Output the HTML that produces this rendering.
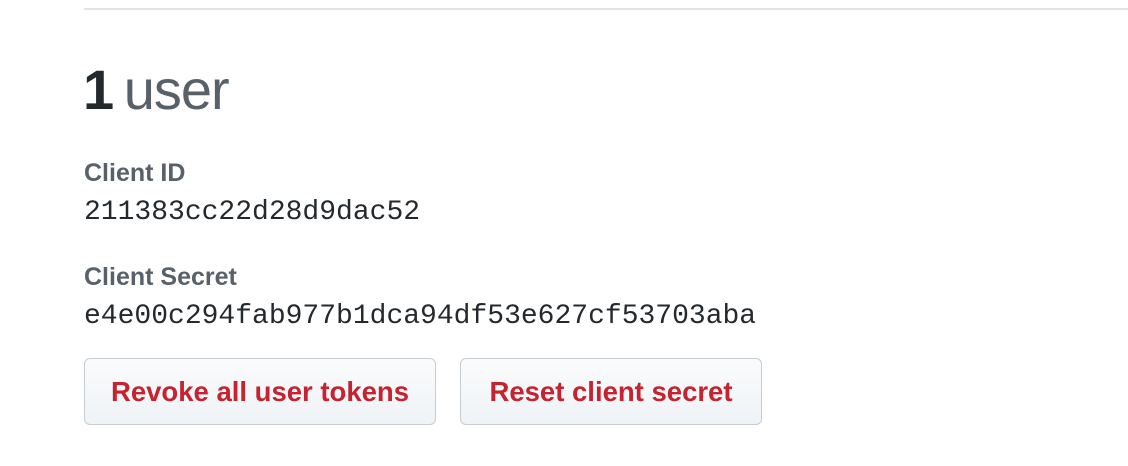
<!DOCTYPE html>
<html><head><style>
body{margin:0;background:#fff;width:1128px;height:466px;overflow:hidden;font-family:"Liberation Sans",sans-serif;position:relative}
.line{position:absolute;left:84px;right:0;top:8px;height:2px;background:#e1e4e8}
.h{position:absolute;left:83px;top:56px;font-size:56px;line-height:68px;color:#586069;white-space:nowrap;letter-spacing:-1px}
.h b{color:#24292e;margin-right:-4px}
.lbl{position:absolute;left:84px;font-size:25px;font-weight:bold;color:#586069;line-height:30px}
.mono{position:absolute;left:84px;font-family:"Liberation Mono",monospace;font-size:28px;color:#24292e;line-height:32px}
.btn{position:absolute;top:358px;height:65px;border:1px solid #c7ccd1;border-radius:6px;background:linear-gradient(#fafbfc,#eff3f6);color:#c4232f;font-weight:bold;font-size:27.5px;line-height:65px;text-align:center;box-sizing:content-box}
</style></head><body>
<div class="line"></div>
<div class="h"><b>1</b> user</div>
<div class="lbl" style="top:158px">Client ID</div>
<div class="mono" style="top:197px">211383cc22d28d9dac52</div>
<div class="lbl" style="top:262px">Client Secret</div>
<div class="mono" style="top:301px">e4e00c294fab977b1dca94df53e627cf53703aba</div>
<div class="btn" style="left:84px;width:350px">Revoke all user tokens</div>
<div class="btn" style="left:460px;width:300px">Reset client secret</div>
</body></html>
